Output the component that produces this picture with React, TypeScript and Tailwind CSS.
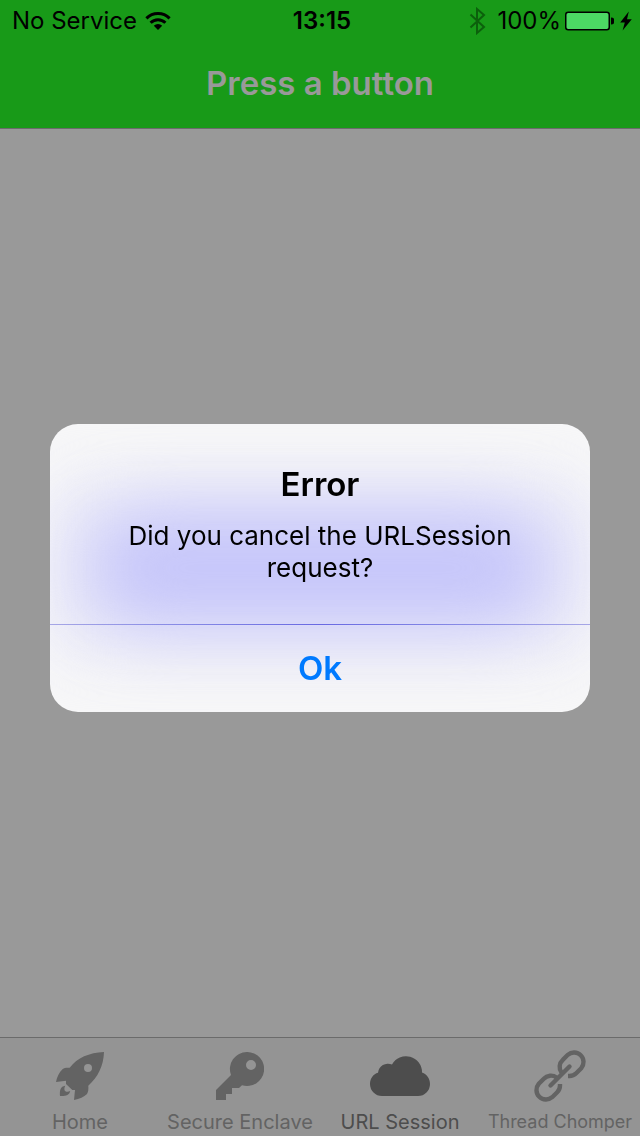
import React from "react";

function WifiIcon() {
  return (
    <svg width="26" height="20" viewBox="0 0 26 20" aria-hidden="true" className="shrink-0">
      <g fill="none" stroke="#000" strokeWidth="3">
        <path d="M1.4 7.4a16.4 16.4 0 0 1 23.2 0" />
        <path d="M5.6 11.8a10.4 10.4 0 0 1 14.8 0" />
      </g>
      <path d="M13 19l-4.2-4.2a6 6 0 0 1 8.4 0z" />
    </svg>
  );
}

function BluetoothIcon() {
  return (
    <svg width="18" height="28" viewBox="0 0 18 28" aria-hidden="true" className="shrink-0">
      <path
        d="M1.5 7.5L15 20l-7 6V2l7 6L1.5 20.5"
        fill="none"
        stroke="#0c600c"
        strokeWidth="2"
      />
    </svg>
  );
}

function BatteryIcon() {
  return (
    <svg width="49" height="20" viewBox="0 0 49 20" aria-hidden="true" className="shrink-0">
      <rect x="0.75" y="1.25" width="43.5" height="17.5" rx="2.5" fill="#4cd964" stroke="#000" strokeWidth="1.5" />
      <path d="M46 6.5a3.5 3.5 0 0 1 0 7z" />
    </svg>
  );
}

function BoltIcon() {
  return (
    <svg width="12" height="20" viewBox="0 0 12 20" aria-hidden="true" className="shrink-0">
      <path d="M8.8 0.4L0.2 11.4h4.6L2.6 19.6 11.8 8.2H7z" />
    </svg>
  );
}

function RocketIcon() {
  return (
    <svg width="48" height="48" viewBox="0 0 48 48" aria-hidden="true" fill="currentColor">
      <path
        fillRule="evenodd"
        d="M48 0C33 .8 21.5 5.5 13.7 15.7C10.5 15.5 8.2 15.8 6.7 17C3 20.5 1 25 0 30L10 28.7V32L16.3 38H19L18 48C23.5 47 28 45 31 42C32.3 40 32.6 37 32.3 33.7C42 25 47.5 14 48 0ZM32 12a4 4 0 1 1 0 8a4 4 0 0 1 0-8Z"
      />
      <path d="M9.2 33.7C4.5 34.5 3.5 38 4 44C9 44.3 13.5 43.5 14.2 39C11 41 6.5 39.5 9.2 33.7Z" />
    </svg>
  );
}

function KeyIcon() {
  return (
    <svg width="48" height="48" viewBox="0 0 48 48" aria-hidden="true" fill="currentColor">
      <path
        fillRule="evenodd"
        d="M31 0a17 17 0 1 1-5 33.2L23 36H16V42H10V48H0V38L15 23A17 17 0 0 1 31 0ZM35 8a5 5 0 1 0 0 10a5 5 0 0 0 0-10Z"
      />
    </svg>
  );
}

function CloudIcon() {
  return (
    <svg width="60" height="40" viewBox="0 0 60 40" aria-hidden="true" fill="currentColor">
      <path d="M12 40A12 12 0 0 1 0 28C0 22.5 3.5 18 8 16.8A10 10 0 0 1 22 8.5A16 16 0 0 1 52 16.5C57 18.5 60 22.5 60 28A12 12 0 0 1 48 40Z" />
    </svg>
  );
}

function ChainIcon() {
  const link = "M34 26H35.5A9.5 9.5 0 0 0 42.2 23.2L47.2 18.2A9.5 9.5 0 0 0 33.8 4.8L28.8 9.8A9.5 9.5 0 0 0 27.5 22.5";
  return (
    <svg width="52" height="52" viewBox="0 0 52 52" aria-hidden="true" fill="none" stroke="currentColor" strokeWidth="4.4">
      <path d={link} />
      <path d={link} transform="matrix(0 1 1 0 0 0)" />
      <path d="M16.5 35.5L35.5 16.5" strokeLinecap="round" />
    </svg>
  );
}

const tabs = [
  { label: "Home", icon: <RocketIcon />, active: false, textSize: "text-xl" },
  { label: "Secure Enclave", icon: <KeyIcon />, active: false, textSize: "text-xl" },
  { label: "URL Session", icon: <CloudIcon />, active: true, textSize: "text-xl" },
  { label: "Thread Chomper", icon: <ChainIcon />, active: false, textSize: "text-lg" },
];

function StatusBar() {
  return (
    <div className="grid h-10 grid-cols-[1fr_auto_1fr] items-center pl-3 pr-2 pt-0.5 text-2xl text-black">
      <div className="flex items-center gap-2">
        <span>No Service</span>
        <WifiIcon />
      </div>
      <time className="font-semibold">13:15</time>
      <div className="flex items-center justify-end">
        <BluetoothIcon />
        <span className="ml-2.5 mr-1">100%</span>
        <BatteryIcon />
        <span className="ml-1.5">
          <BoltIcon />
        </span>
      </div>
    </div>
  );
}

function Alert() {
  return (
    <div className="fixed inset-0 flex items-center justify-center px-12">
      <div
        role="alertdialog"
        aria-labelledby="alert-title"
        aria-describedby="alert-message"
        className="relative w-full max-w-[540px] overflow-hidden rounded-[28px] bg-[#f7f7f8] text-center"
      >
        <div className="absolute inset-x-0 top-16 h-40 bg-[#e9e9f8] blur-[32px]" />
        <div className="absolute inset-x-10 top-22 h-28 rounded-[48px] bg-[#c4c4fa] blur-[36px]" />
        <div className="relative px-16 pb-10 pt-10">
          <h2 id="alert-title" className="text-[33px] font-semibold leading-10 text-black">
            Error
          </h2>
          <p id="alert-message" className="mt-4 text-[26px] leading-8 text-black">
            Did you cancel the URLSession request?
          </p>
        </div>
        <div className="relative h-px bg-linear-to-r from-[#a6a6e6] via-[#6969e2] to-[#a6a6e6]" />
        <button
          type="button"
          className="relative block h-[87px] w-full text-[33px] font-semibold text-[#007aff]"
        >
          Ok
        </button>
      </div>
    </div>
  );
}

export default function App() {
  return (
    <div className="flex min-h-screen flex-col bg-[#999999] font-['Inter',sans-serif]">
      <header className="border-b border-[#6b6b6b] bg-[#189a18]">
        <StatusBar />
        <h1 className="flex h-[88px] items-center justify-center text-[33px] font-semibold text-[#999999]">
          Press a button
        </h1>
      </header>
      <main className="flex-1" />
      <nav className="grid grid-cols-4 border-t border-[#6b6b6b] bg-[#949494]">
        {tabs.map((tab) => (
          <a
            key={tab.label}
            href="#"
            aria-current={tab.active ? "page" : undefined}
            className={
              tab.active
                ? "flex h-[98px] flex-col items-center text-[#4d4d4d]"
                : "flex h-[98px] flex-col items-center text-[#636363]"
            }
          >
            <span className="flex h-[76px] items-center">{tab.icon}</span>
            <span className={tab.textSize}>
              <span className="block whitespace-nowrap leading-4">{tab.label}</span>
            </span>
          </a>
        ))}
      </nav>
      <Alert />
    </div>
  );
}
